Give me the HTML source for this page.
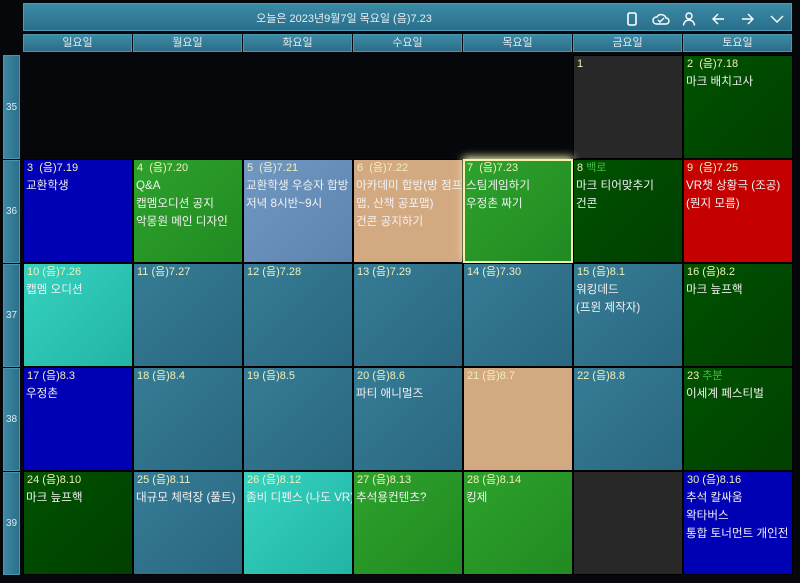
<!DOCTYPE html><html><head><meta charset="utf-8"><style>
*{margin:0;padding:0;box-sizing:border-box}
body{width:800px;height:583px;background:#05070a;overflow:hidden;position:relative;font-family:"Liberation Sans","Noto Sans CJK KR",sans-serif;color:#f2f2f2}
.bar{position:absolute;left:23px;top:3px;width:769px;height:28px;background:linear-gradient(#3a8aa6,#2a6f8c);border:1px solid #4c9ab4}
.bar .t{position:absolute;left:0;width:640px;text-align:center;top:6px;font-size:11px;color:#e8eef2}
.hd{position:absolute;top:34px;height:18px;background:linear-gradient(#3d8ba6,#2c6d88);border:1px solid #4c96b0;font-size:11px;text-align:center;line-height:16px;color:#dfe9ee}
.wk{position:absolute;left:3px;width:17px;background:linear-gradient(90deg,#3d87a2,#2c6f8a);border:1px solid #4a94ae;font-size:10px;color:#dce8ee;display:flex;align-items:center;justify-content:center}
.c{position:absolute;width:110px;height:104px;border:1px solid #000;padding:1px 2px;font-size:11.6px;line-height:18px;overflow:hidden;white-space:nowrap}
.c .d{color:#f0f0b8;font-size:11px;line-height:14px;margin:0 0 2px 1px}
.c .d b{color:#3ec23e;font-weight:normal}
.tl{background:linear-gradient(135deg,#367c96,#2a6780)}
.bl{background:#0000b4}.gr{background:linear-gradient(135deg,#2da22d,#218a21)}.sb{background:linear-gradient(135deg,#7198c2,#5d84ae)}
.tn{background:#d3a982}.dg{background:linear-gradient(135deg,#005200,#003f00)}.rd{background:#c40000}.cy{background:linear-gradient(135deg,#36d2c0,#22b4a4)}.gy{background:#282828}
.ic{position:absolute;top:8px}
</style></head><body>
<div class="bar"><div class="t">오늘은 2023년9월7일 목요일 (음)7.23</div>
<svg class="ic" style="left:602px" width="12" height="14" viewBox="0 0 12 14"><rect x="2" y="1" width="8" height="12" rx="1.5" fill="none" stroke="#fff" stroke-width="1.6"/></svg>
<svg class="ic" style="left:628px" width="18" height="14" viewBox="0 0 18 14"><path d="M4 12h10a3 3 0 0 0 0-6 5 5 0 0 0-9-1 3.5 3.5 0 0 0-1 7z M6 8l2 2 4-4" fill="none" stroke="#fff" stroke-width="1.4"/></svg>
<svg class="ic" style="left:658px" width="14" height="14" viewBox="0 0 14 14"><circle cx="7" cy="4" r="3" fill="none" stroke="#fff" stroke-width="1.4"/><path d="M1.5 13.5a5.5 5.5 0 0 1 11 0" fill="none" stroke="#fff" stroke-width="1.4"/></svg>
<svg class="ic" style="left:687px" width="14" height="14" viewBox="0 0 14 14"><path d="M13 7H2M7 2L2 7l5 5" fill="none" stroke="#fff" stroke-width="1.4"/></svg>
<svg class="ic" style="left:717px" width="14" height="14" viewBox="0 0 14 14"><path d="M1 7h11M7 2l5 5-5 5" fill="none" stroke="#fff" stroke-width="1.4"/></svg>
<svg class="ic" style="left:746px" width="14" height="14" viewBox="0 0 14 14"><path d="M1 4l6 6 6-6" fill="none" stroke="#fff" stroke-width="1.4"/></svg>
</div>
<div class="hd" style="left:23px;width:109px">일요일</div>
<div class="hd" style="left:133px;width:109px">월요일</div>
<div class="hd" style="left:243px;width:109px">화요일</div>
<div class="hd" style="left:353px;width:109px">수요일</div>
<div class="hd" style="left:463px;width:109px">목요일</div>
<div class="hd" style="left:573px;width:109px">금요일</div>
<div class="hd" style="left:683px;width:109px">토요일</div>
<div class="wk" style="top:55px;height:104px">35</div>
<div class="wk" style="top:160px;height:103px">36</div>
<div class="wk" style="top:264px;height:103px">37</div>
<div class="wk" style="top:368px;height:103px">38</div>
<div class="wk" style="top:472px;height:103px">39</div>

<div class="c gy" style="left:573px;top:55px"><div class="d">1</div></div>
<div class="c dg" style="left:683px;top:55px"><div class="d">2 &nbsp;(음)7.18</div>마크 배치고사</div>

<div class="c bl" style="left:23px;top:159px"><div class="d">3 &nbsp;(음)7.19</div>교환학생</div>
<div class="c gr" style="left:133px;top:159px"><div class="d">4 &nbsp;(음)7.20</div>Q&amp;A<br>캡멤오디션 공지<br>악몽원 메인 디자인</div>
<div class="c sb" style="left:243px;top:159px"><div class="d">5 &nbsp;(음)7.21</div>교환학생 우승자 합방<br>저녁 8시반~9시</div>
<div class="c tn" style="left:353px;top:159px"><div class="d">6 &nbsp;(음)7.22</div>아카데미 합방(방 점프<br>맵, 산책 공포맵)<br>건콘 공지하기</div>
<div class="c gr" style="left:463px;top:159px;border:2px solid #f4f0b0;box-shadow:0 -2px 8px #f4f0b0;padding:0 1px"><div class="d">7 &nbsp;(음)7.23</div>스팀게임하기<br>우정촌 짜기</div>
<div class="c dg" style="left:573px;top:159px"><div class="d">8 <b>백로</b></div>마크 티어맞추기<br>건콘</div>
<div class="c rd" style="left:683px;top:159px"><div class="d">9 &nbsp;(음)7.25</div>VR챗 상황극 (조공)<br>(뭔지 모름)</div>

<div class="c cy" style="left:23px;top:263px"><div class="d">10 (음)7.26</div>캡멤 오디션</div>
<div class="c tl" style="left:133px;top:263px"><div class="d">11 (음)7.27</div></div>
<div class="c tl" style="left:243px;top:263px"><div class="d">12 (음)7.28</div></div>
<div class="c tl" style="left:353px;top:263px"><div class="d">13 (음)7.29</div></div>
<div class="c tl" style="left:463px;top:263px"><div class="d">14 (음)7.30</div></div>
<div class="c tl" style="left:573px;top:263px"><div class="d">15 (음)8.1</div>워킹데드<br>(프윈 제작자)</div>
<div class="c dg" style="left:683px;top:263px"><div class="d">16 (음)8.2</div>마크 늪프핵</div>

<div class="c bl" style="left:23px;top:367px"><div class="d">17 (음)8.3</div>우정촌</div>
<div class="c tl" style="left:133px;top:367px"><div class="d">18 (음)8.4</div></div>
<div class="c tl" style="left:243px;top:367px"><div class="d">19 (음)8.5</div></div>
<div class="c tl" style="left:353px;top:367px"><div class="d">20 (음)8.6</div>파티 애니멀즈</div>
<div class="c tn" style="left:463px;top:367px"><div class="d">21 (음)8.7</div></div>
<div class="c tl" style="left:573px;top:367px"><div class="d">22 (음)8.8</div></div>
<div class="c dg" style="left:683px;top:367px"><div class="d">23 <b>추분</b></div>이세계 페스티벌</div>

<div class="c dg" style="left:23px;top:471px"><div class="d">24 (음)8.10</div>마크 늪프핵</div>
<div class="c tl" style="left:133px;top:471px"><div class="d">25 (음)8.11</div>대규모 체력장 (풀트)</div>
<div class="c cy" style="left:243px;top:471px"><div class="d">26 (음)8.12</div>좀비 디펜스 (나도 VR)</div>
<div class="c gr" style="left:353px;top:471px"><div class="d">27 (음)8.13</div>추석용컨텐츠?</div>
<div class="c gr" style="left:463px;top:471px"><div class="d">28 (음)8.14</div>킹제</div>
<div class="c gy" style="left:573px;top:471px"></div>
<div class="c bl" style="left:683px;top:471px"><div class="d">30 (음)8.16</div>추석 칼싸움<br>왁타버스<br>통합 토너먼트 개인전</div>
</body></html>
